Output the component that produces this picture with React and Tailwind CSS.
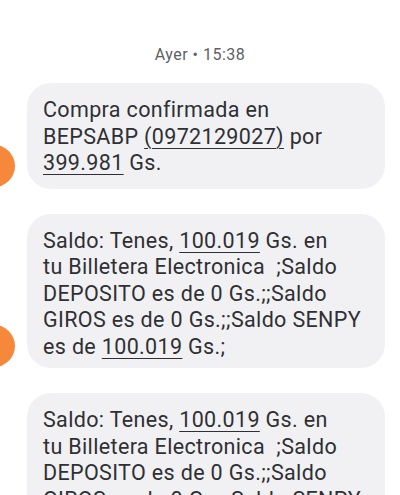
export default function App() {
  const u = 'underline decoration-1 underline-offset-[4px]'
  const bubble =
    'rounded-[24px] bg-[#f1f1f3] pl-4 pr-2 pt-[14px] text-[21.5px] leading-[26.5px] tracking-[0.35px]'

  return (
    <div className="w-[400px] h-[495px] overflow-hidden bg-white font-['Roboto',sans-serif] text-[#2f3033]">
      <div className="pt-[45px] text-center text-[16px] leading-5 tracking-[0.5px] text-[#5f6064]">
        Ayer • 15:38
      </div>

      <div className="mt-[18px] flex flex-col gap-[25px]">
        {/* message 1 */}
        <div className="relative pl-[27px] pr-[15px]">
          <div className="absolute left-[-27px] bottom-[2px] w-[42px] h-[42px] rounded-full bg-[#f5883a]" />
          <div className={`${bubble} pb-[12px]`}>
            Compra confirmada en
            <br />
            BEPSABP <span className={u}>(0972129027)</span> por
            <br />
            <span className={u}>399.981</span> Gs.
          </div>
        </div>

        {/* message 2 */}
        <div className="relative pl-[27px] pr-[15px]">
          <div className="absolute left-[-27px] bottom-[1px] w-[42px] h-[42px] rounded-full bg-[#f5883a]" />
          <div className={`${bubble} pb-[8px]`}>
            Saldo: Tenes, <span className={u}>100.019</span> Gs. en
            <br />
            tu Billetera Electronica&nbsp; ;Saldo
            <br />
            DEPOSITO es de 0 Gs.;;Saldo
            <br />
            GIROS es de 0 Gs.;;Saldo SENPY
            <br />
            es de <span className={u}>100.019</span> Gs.;
          </div>
        </div>

        {/* message 3 */}
        <div className="relative pl-[27px] pr-[15px]">
          <div className={`${bubble} pb-[8px]`}>
            Saldo: Tenes, <span className={u}>100.019</span> Gs. en
            <br />
            tu Billetera Electronica&nbsp; ;Saldo
            <br />
            DEPOSITO es de 0 Gs.;;Saldo
            <br />
            GIROS es de 0 Gs.;;Saldo SENPY
            <br />
            es de <span className={u}>100.019</span> Gs.;
          </div>
        </div>
      </div>
    </div>
  )
}
